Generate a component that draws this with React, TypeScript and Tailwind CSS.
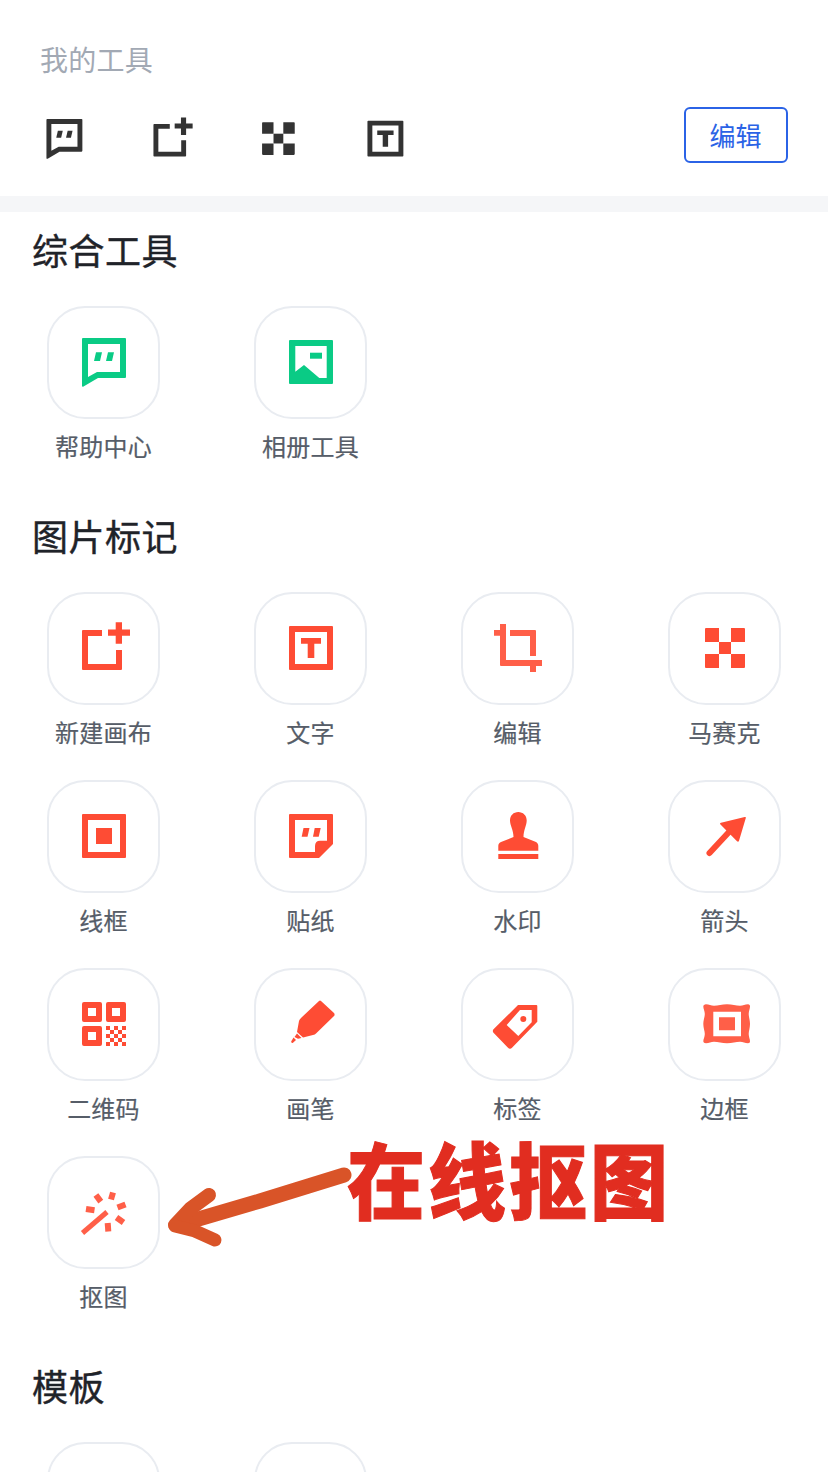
import type { ReactNode } from 'react'

const FONT = "font-['Noto_Sans_CJK_SC','Noto_Sans',sans-serif]"

// 所有图标都画在 49x49 的 viewBox 里，少数会略微超出
function Glyph({ size = 49, children }: { size?: number; children: ReactNode }) {
  return (
    <svg
      width={size}
      height={size}
      viewBox="0 0 49 49"
      fill="currentColor"
      className="shrink-0 overflow-visible"
    >
      {children}
    </svg>
  )
}

const chat = (
  <>
    <path fillRule="evenodd" d="M4 0H46a1 1 0 0 1 1 1V39a1 1 0 0 1-1 1H19L4.500 48.600C3.700 49.100 3 48.700 3 48V1a1 1 0 0 1 1-1ZM9 6V39L18 34H41V6Z" />
    <path d="M17 14.300H23L21 23H15Z" />
    <path d="M29 14.300H35L33 23H27Z" />
  </>
)

const canvas = (
  <>
    <path d="M4 6H23V12H9V40H37V26H43V45a1 1 0 0 1-1 1H4a1 1 0 0 1-1-1V7a1 1 0 0 1 1-1Z" />
    <path d="M36.700-1.700H43V5.500H51V11.700H43V19.700H36.700V11.700H29V5.500H36.700Z" />
  </>
)

const mosaic = (
  <>
    <path d="M6 4H19V18H5V5a1 1 0 0 1 1-1Z" />
    <path d="M31 4H44a1 1 0 0 1 1 1V18H31Z" />
    <path d="M19 18H31V30H19Z" />
    <path d="M5 30H19V44H6a1 1 0 0 1-1-1Z" />
    <path d="M31 30H45V43a1 1 0 0 1-1 1H31Z" />
  </>
)

const textBox = (
  <>
    <path fillRule="evenodd" d="M4 2H46a1 1 0 0 1 1 1V45a1 1 0 0 1-1 1H4a1 1 0 0 1-1-1V3a1 1 0 0 1 1-1ZM9 8V40H41V8Z" />
    <path d="M15 14H35V19.700H28.300V34H21.700V19.700H15Z" />
  </>
)

const album = (
  <>
    <path fillRule="evenodd" d="M4 2H46a1 1 0 0 1 1 1V45a1 1 0 0 1-1 1H4a1 1 0 0 1-1-1V3a1 1 0 0 1 1-1ZM9.300 8V33.700L18 27L33.300 40H40.700V8Z" />
    <path d="M24 14.700H36V20.700H24Z" />
  </>
)

const crop = (
  <>
    <path d="M7 0H13V6H13V36H49V42H43V48H37V42H8a1 1 0 0 1-1-1V11.700H1V6H7Z" />
    <path d="M17 6H42a1 1 0 0 1 1 1V32H37V12H17Z" />
  </>
)

const frame = (
  <path fillRule="evenodd" d="M4 2H46a1 1 0 0 1 1 1V45a1 1 0 0 1-1 1H4a1 1 0 0 1-1-1V3a1 1 0 0 1 1-1ZM9 8V40H41V8ZM17 16H33V32H17Z" />
)

const sticker = (
  <>
    <path fillRule="evenodd" d="M4 2H46a1 1 0 0 1 1 1V32L33 46H4a1 1 0 0 1-1-1V3a1 1 0 0 1 1-1ZM9 8V40H29V34C29 30.500 31 28.700 34 28.700H41V8Z" />
    <path d="M17.500 16H23.500L21.500 24.700H15.700Z" />
    <path d="M28.700 16H34.700L32.700 24.700H27Z" />
  </>
)

const stamp = (
  <>
    <path d="M25.300 0C20.500 0 17 3.500 17 8.500C17 13.500 20.500 18 20.500 25L8 30C6 31 5.300 32 5.300 34V38.700H45.300V34C45.300 32 44.500 31 43 30L30.500 25C30.500 18 33.700 13.500 33.700 8.500C33.700 3.500 30 0 25.300 0Z" />
    <path d="M5.300 42H45.300V47H5.300Z" />
  </>
)

const arrow = (
  <>
    <path d="M9.500 41L29 20" stroke="currentColor" strokeWidth="6" strokeLinecap="round" />
    <path d="M44.700 5C45.500 4.800 46 5.300 45.800 6L39 28.700C38.700 29.800 37.800 30 37 29.200L20.500 12.500C19.700 11.700 20 11 21 10.700Z" />
  </>
)

function QrCheckerCells() {
  const cells: ReactNode[] = []
  for (let r = 0; r < 5; r++) {
    for (let c = 0; c < 5; c++) {
      if ((r + c) % 2 === 0) {
        cells.push(<rect key={`${r}-${c}`} x={27 + c * 4} y={26 + r * 4} width="4" height="4" />)
      }
    }
  }
  return <>{cells}</>
}

const qr = (
  <>
    <path fillRule="evenodd" d="M5 2H21a2 2 0 0 1 2 2V20a2 2 0 0 1-2 2H5a2 2 0 0 1-2-2V4a2 2 0 0 1 2-2ZM9 8V16H17V8Z" />
    <path fillRule="evenodd" d="M29 2H45a2 2 0 0 1 2 2V20a2 2 0 0 1-2 2H29a2 2 0 0 1-2-2V4a2 2 0 0 1 2-2ZM33 8V16H41V8Z" />
    <path fillRule="evenodd" d="M5 26H21a2 2 0 0 1 2 2V44a2 2 0 0 1-2 2H5a2 2 0 0 1-2-2V28a2 2 0 0 1 2-2ZM9 32V40H17V32Z" />
    <QrCheckerCells />
  </>
)

const brush = (
  <>
    <path d="M35 1L48 13Q49.200 14.800 48 16L30 33.500Q29 34.500 27 35L17 37.500L11 32L13 21Q13.500 19 15.500 17.500L33 1Q34 0 35 1Z" />
    <path d="M11 33.500L15.500 38L12 38.800L8.500 37Z" />
    <path d="M7.500 37.500L10 40L7 42.800C6 43.400 4.800 42.300 5.300 41.300Z" />
  </>
)

const tag = (
  <path fillRule="evenodd" d="M25 5H43.300a1 1 0 0 1 1 1V21.700L19 47.800C17.800 49 16.200 49 15 47.800L.5 32.800C-.4 31.800-.4 30.200.5 29.200ZM27 10L13.700 25L25.300 36L38.700 22.300V10ZM30.300 16A3 3 0 1 1 30.300 22A3 3 0 1 1 30.300 16Z" />
)

const wavy = (
  <path fillRule="evenodd" d="M6 4.300C9 4.300 11 5.800 14 5.800C18 5.800 22 4.300 27 4.300C32 4.300 36 5.800 40 5.800C43 5.800 45 4.300 48 4.300C49.500 4.300 50 5.300 50 6.500C50 9 48.700 11 48.700 14C48.700 17 50 20 50 24C50 28 48.700 31 48.700 34C48.700 37 50 39 50 41.300C50 42.500 49.500 43.300 48 43.300C45 43.300 43 41.800 40 41.800C36 41.800 32 43.300 27 43.300C22 43.300 18 41.800 14 41.800C11 41.800 9 43.300 6 43.300C4.500 43.300 3.300 42.500 3.300 41.300C3.300 39 4.800 37 4.800 34C4.800 31 3.300 28 3.300 24C3.300 20 4.800 17 4.800 14C4.800 11 3.300 9 3.300 6.500C3.300 5.300 4.500 4.300 6 4.300ZM13.300 11.700V36.300H41V11.700ZM19 17.300H35V30.300H19Z" />
)

const wand = (
  <g stroke="currentColor" fill="none" strokeLinecap="butt">
    <path d="M3.500 45L28 24" strokeWidth="5" />
    <path d="M16.900 7L21.800 13.600" strokeWidth="6" />
    <path d="M34 4.500L32 11.500" strokeWidth="6" />
    <path d="M38.500 19.500L46.500 16.500" strokeWidth="6" />
    <path d="M37.500 29.500L44.500 34.500" strokeWidth="6" />
    <path d="M28.700 35L29.300 43.500" strokeWidth="6" />
    <path d="M7 21L15.500 22.300" strokeWidth="6" />
  </g>
)

type Tool = { label: string; icon: ReactNode; color: string }

const RED = 'text-[#fe4c34]'
const CORAL = 'text-[#ff5f48]'
const GREEN = 'text-[#0acb85]'

const general: Tool[] = [
  { label: '帮助中心', icon: chat, color: GREEN },
  { label: '相册工具', icon: album, color: GREEN },
]

const marking: Tool[] = [
  { label: '新建画布', icon: canvas, color: RED },
  { label: '文字', icon: textBox, color: RED },
  { label: '编辑', icon: crop, color: CORAL },
  { label: '马赛克', icon: mosaic, color: RED },
  { label: '线框', icon: frame, color: RED },
  { label: '贴纸', icon: sticker, color: RED },
  { label: '水印', icon: stamp, color: RED },
  { label: '箭头', icon: arrow, color: RED },
  { label: '二维码', icon: qr, color: RED },
  { label: '画笔', icon: brush, color: RED },
  { label: '标签', icon: tag, color: RED },
  { label: '边框', icon: wavy, color: CORAL },
  { label: '抠图', icon: wand, color: CORAL },
]

const templates: Tool[] = [
  { label: '', icon: null, color: RED },
  { label: '', icon: null, color: RED },
]

function Section({ title, tools, className }: { title: string; tools: Tool[]; className: string }) {
  return (
    <section className={className}>
      <h2 className="h-[50px] pl-[32px] text-[36px] font-normal leading-[46px] tracking-[0.5px] text-[#1f2329] [-webkit-text-stroke:0.4px_#1f2329]">
        {title}
      </h2>
      <div className="mt-[30px] grid grid-cols-4">
        {tools.map((tool, i) => (
          <div key={i} className="flex h-[188px] flex-col items-center">
            <div
              className={`flex h-[113px] w-[113px] items-center justify-center rounded-[38px] border-2 border-[#e9ecf1] bg-white ${tool.color}`}
            >
              {tool.icon && <Glyph>{tool.icon}</Glyph>}
            </div>
            <span className="mt-[10px] text-[24px] leading-[34px] tracking-[0.25px] text-[#565d68] [-webkit-text-stroke:0.2px_#565d68]">
              {tool.label}
            </span>
          </div>
        ))}
      </div>
    </section>
  )
}

function App() {
  return (
    <div className={`relative h-[1472px] w-[828px] overflow-hidden bg-white ${FONT}`}>
      {/* 我的工具 */}
      <div className="px-[40px] pb-[33px] pt-[39px]">
        <div className="text-[28px] leading-[40px] tracking-[0.25px] text-[#a2a9b4]">我的工具</div>
        <div className="mt-[28px] flex items-start justify-between">
          <div className="ml-[4px] mt-[12px] flex gap-[67px] text-[#333333]">
            <Glyph size={40}>{chat}</Glyph>
            <Glyph size={40}>{canvas}</Glyph>
            <Glyph size={40}>{mosaic}</Glyph>
            <Glyph size={40}>{textBox}</Glyph>
          </div>
          <button className="h-[56px] w-[104px] rounded-[6px] border-2 border-[#2b63e6] pb-[2px] pr-[1px] text-[26px] text-[#2b63e6]">
            编辑
          </button>
        </div>
      </div>
      <div className="h-[16px] bg-[#f5f6f8]" />

      <Section title="综合工具" tools={general} className="pt-[14px]" />
      <Section title="图片标记" tools={marking} className="pt-[18px]" />
      <Section title="模板" tools={templates} className="pt-[18px]" />

      {/* 手写标注 */}
      <svg
        className="absolute left-0 top-0"
        width="828"
        height="1472"
        viewBox="0 0 828 1472"
        fill="none"
        stroke="#d95428"
        strokeLinecap="round"
        strokeLinejoin="round"
      >
        <path d="M344 1175L260 1201L178 1225" strokeWidth="15" />
        <path d="M209 1195L190 1209L175 1225" strokeWidth="14" />
        <path d="M175 1226L195 1231L215 1240" strokeWidth="13" />
      </svg>
      <div className="absolute left-[347px] top-[1129px] origin-top scale-y-[1.06] whitespace-nowrap text-[78px] font-black leading-[90px] tracking-[3px] text-[#e12d20] [-webkit-text-stroke:1px_#e12d20]">
        在线抠图
      </div>
    </div>
  )
}

export default App
